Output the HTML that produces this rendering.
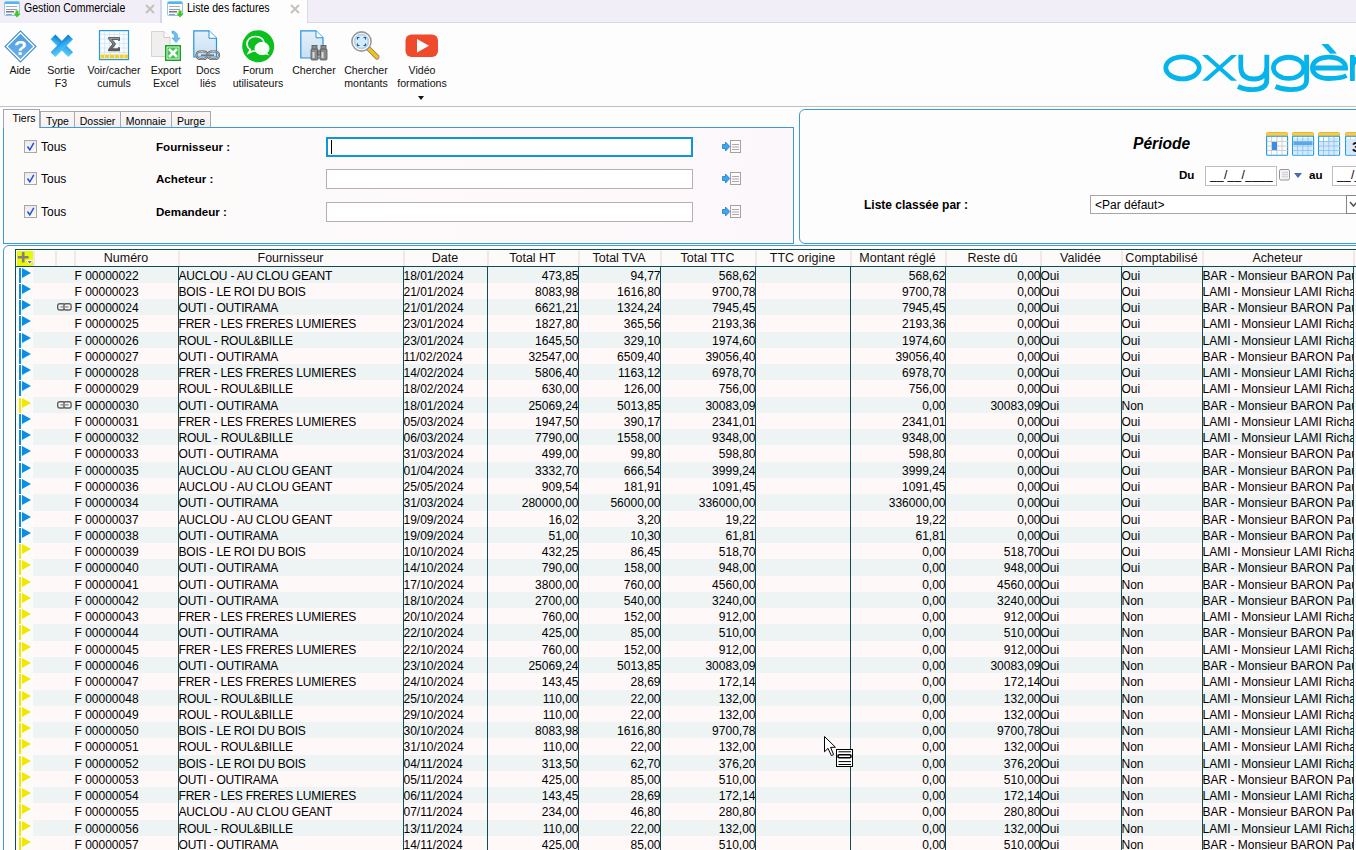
<!DOCTYPE html>
<html><head><meta charset="utf-8">
<style>
*{box-sizing:border-box;margin:0;padding:0}
html,body{width:1356px;height:850px;overflow:hidden;background:#fefdfd;font-family:"Liberation Sans",sans-serif;color:#000;position:relative}
.a{position:absolute}
/* tab bar */
#tabbar{position:absolute;left:0;top:0;width:1356px;height:23px;background:#f2eef8}
.tab{position:absolute;top:0;height:16px;font-size:12.4px;line-height:16px;white-space:nowrap;transform:scaleX(0.85);transform-origin:0 0;color:#000}
.tabx{position:absolute;top:4px;width:10px;height:10px}
/* toolbar */
.tb{position:absolute;top:30px;text-align:center;font-size:10.6px;line-height:13px;color:#111;white-space:nowrap}
.tbt{position:absolute;top:64px;width:100px;text-align:center;font-size:10.6px;line-height:13px;color:#111;white-space:nowrap}
/* filter */
.lbl{position:absolute;font-size:12px;white-space:nowrap}
.b{font-weight:bold;font-size:11.6px}
.cb{position:absolute;width:13px;height:13px;border:1px solid #a8a8a8;background:linear-gradient(#eaeaea,#fafafa)}
.inp{position:absolute;left:326px;width:367px;height:20px;border:1px solid #b8b0b0;background:#fff}
.ptab{position:absolute;font-size:10.5px;line-height:16px;text-align:center;border:1px solid #a8a8b0;border-bottom:none;background:linear-gradient(#fbf7f7,#f3efef)}
/* grid */
.row{position:absolute;left:33px;width:1323px;height:16px}
.row .fb{position:absolute;left:-14px;top:1px;width:2px;height:15px}
.row .ft{position:absolute;left:-11px;top:1px;width:0;height:0;border-top:5px solid transparent;border-bottom:5px solid transparent;border-left:9px solid #0a8ee8}
.c{position:absolute;top:0;height:16px;font-size:12px;line-height:16px;padding-top:1px;white-space:nowrap;overflow:hidden}
.c.r{text-align:right}
.lk{position:absolute;left:24px;top:4px}
.h{position:absolute;top:250px;height:16px;font-size:12.5px;line-height:16px;text-align:center;color:#111;white-space:nowrap}
.hs{position:absolute;top:251px;width:2px;height:15px;background:#f3e6e6}
.vl{position:absolute;top:266px;width:1px;height:584px;background:#0f4d55}
</style></head><body>

<!-- TAB BAR -->
<div id="tabbar"></div>
<div class="a" style="left:160px;top:0;width:2px;height:23px;background:#d4d6ea"></div>
<div class="a" style="left:162px;top:0;width:145px;height:23px;background:#fefdfd"></div>
<div class="a" style="left:307px;top:0;width:1px;height:23px;background:#d6dbea"></div><div class="a" style="left:307px;top:22px;width:1049px;height:1px;background:#d6dbea"></div>
<svg class="a" style="left:4px;top:1px" width="17" height="17" viewBox="0 0 17 17"><rect x="0.5" y="0.5" width="15" height="14" rx="1" fill="#fbfbfb" stroke="#8cc8ee"/><rect x="1" y="1" width="14" height="2" fill="#50b8f0"/><rect x="2" y="5" width="11" height="1" fill="#aab"/><rect x="2" y="8" width="11" height="1" fill="#99a"/><rect x="2" y="10" width="8" height="1.5" fill="#777"/><rect x="2" y="13" width="6" height="1" fill="#99a"/><path d="M11.5 9.5 H14.5 V12.5 H16.5 L13 16.5 L9.5 12.5 H11.5 Z" fill="#3fc81a"/></svg>
<div class="tab" style="left:24px">Gestion Commerciale</div>
<svg class="tabx" style="left:145px" viewBox="0 0 10 10"><path d="M1 1 L9 9 M9 1 L1 9" stroke="#c8c0bc" stroke-width="2"/></svg>
<svg class="a" style="left:167px;top:1px" width="17" height="17" viewBox="0 0 17 17"><rect x="0.5" y="0.5" width="15" height="14" rx="1" fill="#fbfbfb" stroke="#8cc8ee"/><rect x="1" y="1" width="14" height="2" fill="#50b8f0"/><rect x="2" y="5" width="11" height="1" fill="#aab"/><rect x="2" y="8" width="11" height="1" fill="#99a"/><rect x="2" y="10" width="8" height="1.5" fill="#777"/><rect x="2" y="13" width="6" height="1" fill="#99a"/><path d="M11.5 9.5 H14.5 V12.5 H16.5 L13 16.5 L9.5 12.5 H11.5 Z" fill="#3fc81a"/></svg>
<div class="tab" style="left:187px">Liste des factures</div>
<svg class="tabx" style="left:290px" viewBox="0 0 10 10"><path d="M1 1 L9 9 M9 1 L1 9" stroke="#c8c0bc" stroke-width="2"/></svg>

<!-- TOOLBAR -->
<!-- Aide -->
<svg class="a" style="left:3.5px;top:29.5px" width="33" height="33" viewBox="0 0 32 32"><defs><linearGradient id="gaide" x1="0" y1="0" x2="0" y2="1"><stop offset="0" stop-color="#4f9ee0"/><stop offset="1" stop-color="#6ab0ea"/></linearGradient></defs><path d="M16 0.3 L31.7 16 L16 31.7 L0.3 16 Z" fill="#2f86d2"/><path d="M16 1.8 L30.2 16 L16 30.2 L1.8 16 Z" fill="#fff"/><path d="M16 3.6 L28.4 16 L16 28.4 L3.6 16 Z" fill="url(#gaide)"/><text x="16" y="24.6" text-anchor="middle" font-family="Liberation Sans" font-weight="bold" font-size="20.5" fill="#fff">?</text></svg>
<div class="tbt" style="left:-30px">Aide</div>
<!-- Sortie -->
<svg class="a" style="left:46px;top:30px" width="32" height="32" viewBox="0 0 32 32"><defs><linearGradient id="gx" x1="0" y1="0" x2="1" y2="1"><stop offset="0" stop-color="#0a78d0"/><stop offset="0.45" stop-color="#30aaf0"/><stop offset="1" stop-color="#60d0fa"/></linearGradient></defs><g transform="translate(15.8,15.8) rotate(45)"><rect x="-12.5" y="-3.4" width="25" height="6.8" fill="url(#gx)"/><rect x="-3.4" y="-12.5" width="6.8" height="25" fill="url(#gx)"/></g></svg>
<div class="tbt" style="left:11px">Sortie<br>F3</div>
<!-- Voir/cacher -->
<svg class="a" style="left:98px;top:30px" width="32" height="31" viewBox="0 0 32 31"><defs><linearGradient id="gs" x1="0" y1="0" x2="0" y2="1"><stop offset="0" stop-color="#9a9a9a"/><stop offset="1" stop-color="#5a5a5a"/></linearGradient></defs><rect x="1.5" y="0.6" width="29" height="29" fill="#f8fbfe" stroke="#2a96e0" stroke-width="1.2"/><g stroke="#d2e4f4" stroke-width="0.8"><path d="M2 4.5 H30 M2 9 H30 M2 13.5 H30 M2 18 H30 M2 22.5 H30 M6.5 1 V29 M11.5 1 V29 M16.5 1 V29 M21.5 1 V29 M26 1 V29"/></g><g fill="#f2cf2a"><rect x="2.5" y="24.5" width="3.6" height="4"/><rect x="7" y="24.5" width="4" height="4"/><rect x="12" y="24.5" width="4" height="4"/><rect x="17" y="24.5" width="4" height="4"/><rect x="22" y="24.5" width="3.6" height="4"/><rect x="26.5" y="24.5" width="3.5" height="4"/></g><path d="M10.5 7.5 H21.5 V10.5 H20.3 V9.5 H14 L17.6 14 L14 18.8 H20.3 V17.6 H21.5 V20.8 H10.5 V19.4 L14.8 14 L10.5 8.8 Z" fill="url(#gs)" stroke="#3a3a3a" stroke-width="0.7" stroke-linejoin="round"/></svg>
<div class="tbt" style="left:64px">Voir/cacher<br>cumuls</div>
<!-- Export Excel -->
<svg class="a" style="left:150px;top:30px" width="32" height="32" viewBox="0 0 32 32"><path d="M1.5 1.5 H14 L20 7.5 V26.5 H1.5 Z" fill="#f1eeee" stroke="#d8d2d2" stroke-width="1"/><path d="M14 1.5 V7.5 H20" fill="#fff" stroke="#d0caca" stroke-width="1"/><path d="M22 1 C26.5 1.5 28 4 27.6 8 L30 8 L26 12.5 L22 8 L24.6 8 C24.8 5 24 3.6 22 3.2 Z" fill="#6cc0f0" stroke="#3a9ee0" stroke-width="0.6"/><rect x="15.5" y="15.5" width="15" height="15" fill="#2db83a" stroke="#1e9a2a" stroke-width="1"/><rect x="17" y="17" width="12" height="12" fill="#36c846" stroke="#fff" stroke-width="0.8"/><path d="M19 19 L27 27 M27 19 L19 27" stroke="#fff" stroke-width="2.6"/></svg>
<div class="tbt" style="left:116px">Export<br>Excel</div>
<!-- Docs liés -->
<svg class="a" style="left:193px;top:30px" width="30" height="32" viewBox="0 0 30 32"><defs><linearGradient id="gd" x1="0" y1="0" x2="0" y2="1"><stop offset="0" stop-color="#e6f0f8"/><stop offset="1" stop-color="#c6e0f4"/></linearGradient></defs><path d="M0.8 0.8 H16 L23.5 8.3 V27 H0.8 Z" fill="url(#gd)" stroke="#2a92de" stroke-width="1.2"/><path d="M16 0.8 V8.3 H23.5" fill="#fff" stroke="#2a92de" stroke-width="1"/><g fill="none" stroke="#555" stroke-width="2.2"><rect x="3.5" y="21.5" width="11" height="7.5" rx="3.7"/><rect x="15" y="21.5" width="11" height="7.5" rx="3.7"/></g><g fill="none" stroke="#bbb" stroke-width="1"><rect x="3.5" y="21.5" width="11" height="7.5" rx="3.7"/><rect x="15" y="21.5" width="11" height="7.5" rx="3.7"/></g><path d="M8 25.2 H21" stroke="#777" stroke-width="1.6"/></svg>
<div class="tbt" style="left:158px">Docs<br>liés</div>
<!-- Forum -->
<svg class="a" style="left:242px;top:30px" width="33" height="33" viewBox="0 0 33 33"><circle cx="16.2" cy="16.2" r="16" fill="#0bbf1e"/><path d="M13.5 6.5 C8.5 6.5 5 9.8 5 13.8 C5 16.3 6.3 18.4 8.3 19.7 L6.5 23 L11 21 C11.8 21.2 12.6 21.3 13.5 21.3" fill="none" stroke="#fff" stroke-width="1.6"/><path d="M13.5 6.5 C18.5 6.5 22 9.5 22 13" fill="none" stroke="#fff" stroke-width="1.6"/><ellipse cx="20" cy="18.5" rx="7" ry="6.2" fill="#fff" stroke="#fff"/><path d="M24.5 22.5 L27.5 25.5 L22 24" fill="#fff"/><ellipse cx="20" cy="18.5" rx="5.8" ry="5" fill="#f4fff4"/></svg>
<div class="tbt" style="left:208px">Forum<br>utilisateurs</div>
<!-- Chercher -->
<svg class="a" style="left:300px;top:30px" width="30" height="32" viewBox="0 0 30 32"><defs><linearGradient id="gc" x1="0" y1="0" x2="0" y2="1"><stop offset="0" stop-color="#e6f0f8"/><stop offset="1" stop-color="#c6e0f4"/></linearGradient></defs><path d="M0.8 0.8 H16 L23 7.8 V28 H0.8 Z" fill="url(#gc)" stroke="#2a92de" stroke-width="1.2"/><path d="M16 0.8 V7.8 H23" fill="#fff" stroke="#2a92de" stroke-width="1"/><g fill="#8a8a8a" stroke="#555" stroke-width="0.8"><rect x="12" y="15.5" width="5" height="4"/><rect x="21" y="15.5" width="5" height="4"/><rect x="11" y="19" width="7" height="11" rx="1"/><rect x="20" y="19" width="7" height="11" rx="1"/><rect x="17.5" y="21" width="3" height="4"/></g><g fill="#ddd"><rect x="12.5" y="22" width="2" height="6"/><rect x="21.5" y="22" width="2" height="6"/></g></svg>
<div class="tbt" style="left:264px">Chercher</div>
<!-- Chercher montants -->
<svg class="a" style="left:350px;top:30px" width="32" height="32" viewBox="0 0 32 32"><path d="M17 17 L27 27" stroke="#777" stroke-width="5" stroke-linecap="round"/><path d="M19.5 19.5 L27 27" stroke="#f2c21a" stroke-width="3.6" stroke-linecap="round"/><circle cx="11.5" cy="11.5" r="9.6" fill="#fff" stroke="#9a9a9a" stroke-width="1.6"/><circle cx="11.5" cy="11.5" r="7.4" fill="#a8d8f8" stroke="#c8c8c8" stroke-width="0.8"/><circle cx="11.5" cy="11.5" r="6" fill="#d2ecfc"/><path d="M7.5 9.5 V7.5 H9.5 M13.5 7.5 H15.5 V9.5 M15.5 13.5 V15.5 H13.5 M9.5 15.5 H7.5 V13.5" fill="none" stroke="#1a5aa8" stroke-width="1.2"/></svg>
<div class="tbt" style="left:316px">Chercher<br>montants</div>
<!-- Video -->
<svg class="a" style="left:405px;top:34px" width="34" height="24" viewBox="0 0 34 24"><rect x="0.5" y="0.5" width="32.5" height="22.5" rx="6" fill="#f04a2c"/><path d="M12 5 L24 11.8 L12 18.6 Z" fill="#fff"/></svg>
<div class="tbt" style="left:372px">Vidéo<br>formations</div>
<div class="a" style="left:418px;top:96px;width:0;height:0;border-left:3.5px solid transparent;border-right:3.5px solid transparent;border-top:4px solid #111"></div>

<!-- LOGO -->
<svg class="a" style="left:1150px;top:35px" width="206" height="65" viewBox="0 0 206 65">
<g fill="none" stroke="#04b4ea" stroke-width="4.8">
<ellipse cx="32.5" cy="32.85" rx="16.7" ry="11"/>
<path d="M90.8 19.8 V32 C90.8 40 95.5 44 104 44 C112 44 116.8 40 116.8 32 V19.8 M116.8 32 V45 C116.8 51.5 112 54.6 102.5 54.6 C96.5 54.6 92 53.5 88 51.5"/>
<ellipse cx="138.6" cy="32.85" rx="15.2" ry="10.6"/>
<path d="M156.6 19.8 V45 C156.6 51.5 151 54.6 141 54.6 C134.5 54.6 130 53.5 125.5 51.5"/>
<path d="M196.5 40.5 C192 43 186 43.5 179 43.5 C168.5 43.5 162.4 39 162.4 32.85 C162.4 26.5 169.5 22.2 179 22.2 C188.5 22.2 195.6 26.5 195.6 33 H161"/>
<path d="M202.4 20 V46"/>
<path d="M202.4 31 C204 25 207 22.5 212 22.2"/>
</g>
<g fill="#04b4ea">
<path d="M52 19.9 H58 L87 45.8 H81 Z"/>
<path d="M81.3 19.9 H87 L58 45.8 H52 Z"/>
<path d="M171.4 9 H178.3 L186.9 18.5 L180.3 18.8 Z"/>
</g>
</svg>


<!-- toolbar bottom line -->
<div class="a" style="left:0;top:106px;width:1356px;height:1px;background:#c4c0c0"></div>

<!-- FILTER PANEL -->
<!-- left panel -->
<div class="a" style="left:3px;top:127px;width:791px;height:117px;border:1px solid #3c9ad8;background:linear-gradient(100deg,#fdfbfa 0%,#fdf9fb 60%,#fcf7fa 100%)"></div>
<!-- tabs -->
<div class="ptab" style="left:40px;top:111px;width:35px;height:16px;line-height:18px">Type</div>
<div class="ptab" style="left:74px;top:111px;width:47px;height:16px;line-height:18px">Dossier</div>
<div class="ptab" style="left:120px;top:111px;width:52px;height:16px;line-height:18px">Monnaie</div>
<div class="ptab" style="left:171px;top:111px;width:40px;height:16px;line-height:18px">Purge</div>
<div class="ptab" style="left:3px;top:109px;width:37px;height:19px;line-height:17px;padding-left:5px;background:#fdfbfa;border-color:#9aa8b8">Tiers</div>
<!-- rows -->
<div class="cb" style="left:24px;top:140px"></div>
<div class="cb" style="left:24px;top:172px"></div>
<div class="cb" style="left:24px;top:205px"></div>
<svg class="a" style="left:24px;top:140px" width="13" height="13"><path d="M3.5 6.5 L5.8 9.8 L9.8 2.8" fill="none" stroke="#2a50d8" stroke-width="1.5"/></svg>
<svg class="a" style="left:24px;top:172px" width="13" height="13"><path d="M3.5 6.5 L5.8 9.8 L9.8 2.8" fill="none" stroke="#2a50d8" stroke-width="1.5"/></svg>
<svg class="a" style="left:24px;top:205px" width="13" height="13"><path d="M3.5 6.5 L5.8 9.8 L9.8 2.8" fill="none" stroke="#2a50d8" stroke-width="1.5"/></svg>
<div class="lbl" style="left:41px;top:140px">Tous</div>
<div class="lbl" style="left:41px;top:172px">Tous</div>
<div class="lbl" style="left:41px;top:205px">Tous</div>
<div class="lbl b" style="left:156px;top:140px">Fournisseur :</div>
<div class="lbl b" style="left:156px;top:172px">Acheteur :</div>
<div class="lbl b" style="left:156px;top:205px">Demandeur :</div>
<div class="inp" style="top:137px;border:2px solid #1096d8"></div>
<div class="a" style="left:331px;top:140px;width:1px;height:14px;background:#000"></div>
<div class="inp" style="top:169px"></div>
<div class="inp" style="top:202px"></div>
<svg class="a" style="left:722px;top:140px" width="20" height="14" viewBox="0 0 20 14"><rect x="8.5" y="0.5" width="10" height="12" fill="#fafafa" stroke="#a8a0a0"/><path d="M10 4.5 H17 M10 7 H17 M10 9.5 H17" stroke="#b0a8a8"/><path d="M0.5 4.5 H3.5 V2 L7.8 6.5 L3.5 11 V8.5 H0.5 Z" fill="#3aa8f0" stroke="#1a7cc8" stroke-width="0.8"/></svg>
<svg class="a" style="left:722px;top:172px" width="20" height="14" viewBox="0 0 20 14"><rect x="8.5" y="0.5" width="10" height="12" fill="#fafafa" stroke="#a8a0a0"/><path d="M10 4.5 H17 M10 7 H17 M10 9.5 H17" stroke="#b0a8a8"/><path d="M0.5 4.5 H3.5 V2 L7.8 6.5 L3.5 11 V8.5 H0.5 Z" fill="#3aa8f0" stroke="#1a7cc8" stroke-width="0.8"/></svg>
<svg class="a" style="left:722px;top:205px" width="20" height="14" viewBox="0 0 20 14"><rect x="8.5" y="0.5" width="10" height="12" fill="#fafafa" stroke="#a8a0a0"/><path d="M10 4.5 H17 M10 7 H17 M10 9.5 H17" stroke="#b0a8a8"/><path d="M0.5 4.5 H3.5 V2 L7.8 6.5 L3.5 11 V8.5 H0.5 Z" fill="#3aa8f0" stroke="#1a7cc8" stroke-width="0.8"/></svg>

<!-- right panel -->
<div class="a" style="left:799px;top:109px;width:600px;height:135px;border:1px solid #3c9ad8;border-radius:6px;background:#fefdfd"></div>
<div class="lbl" style="left:1133px;top:135px;font-size:15.6px;font-weight:bold;font-style:italic">Période</div>
<svg class="a" style="left:1266px;top:132px" width="23" height="24" viewBox="0 0 23 24"><rect x="0.5" y="0.5" width="21" height="4" rx="1" fill="#f6cc4c" stroke="#e8b830"/><rect x="0.6" y="4.2" width="21" height="19" rx="0.8" fill="#fafcfe" stroke="#1a9ae8" stroke-width="1.1"/><g stroke="#c8c4c4" stroke-width="0.8"><path d="M5.5 5 V23"/><path d="M10.8 5 V23"/><path d="M16 5 V23"/><path d="M1 9.5 H22"/><path d="M1 14 H22"/><path d="M1 18.5 H22"/></g><rect x="6" y="10" width="5" height="8" fill="#3a8ee0"/></svg>
<svg class="a" style="left:1292px;top:132px" width="23" height="24" viewBox="0 0 23 24"><rect x="0.5" y="0.5" width="21" height="4" rx="1" fill="#f6cc4c" stroke="#e8b830"/><rect x="0.6" y="4.2" width="21" height="19" rx="0.8" fill="#fafcfe" stroke="#1a9ae8" stroke-width="1.1"/><rect x="2" y="6" width="18" height="16" fill="#d4eafc"/><g stroke="#88c0f0" stroke-width="0.8"><path d="M5.5 5 V23"/><path d="M10.8 5 V23"/><path d="M16 5 V23"/><path d="M1 9.5 H22"/><path d="M1 14 H22"/><path d="M1 18.5 H22"/></g><rect x="1.5" y="9.5" width="19" height="3.5" fill="#5aa8ea"/></svg>
<svg class="a" style="left:1318px;top:132px" width="23" height="24" viewBox="0 0 23 24"><rect x="0.5" y="0.5" width="21" height="4" rx="1" fill="#f6cc4c" stroke="#e8b830"/><rect x="0.6" y="4.2" width="21" height="19" rx="0.8" fill="#fafcfe" stroke="#1a9ae8" stroke-width="1.1"/><g stroke="#c8c4c4" stroke-width="0.8"><path d="M5.5 5 V23"/><path d="M10.8 5 V23"/><path d="M16 5 V23"/><path d="M1 9.5 H22"/><path d="M1 14 H22"/><path d="M1 18.5 H22"/></g><rect x="2" y="10" width="18" height="12" fill="#d4eafc"/><rect x="11" y="6" width="9" height="4" fill="#d4eafc"/><g stroke="#88c0f0" stroke-width="0.8"><path d="M5.5 5 V23"/><path d="M10.8 5 V23"/><path d="M16 5 V23"/><path d="M1 9.5 H22"/><path d="M1 14 H22"/><path d="M1 18.5 H22"/></g></svg>
<svg class="a" style="left:1345px;top:132px" width="23" height="24" viewBox="0 0 23 24"><rect x="0.5" y="0.5" width="21" height="4" rx="1" fill="#f6cc4c" stroke="#e8b830"/><rect x="0.6" y="4.2" width="21" height="19" rx="0.8" fill="#fafcfe" stroke="#1a9ae8" stroke-width="1.1"/><g stroke="#c8c4c4" stroke-width="0.8"><path d="M5.5 5 V23"/><path d="M10.8 5 V23"/><path d="M16 5 V23"/><path d="M1 9.5 H22"/><path d="M1 14 H22"/><path d="M1 18.5 H22"/></g><rect x="2" y="7" width="18" height="15" fill="#d4eafc"/><text x="7" y="20" font-family="Liberation Sans" font-weight="bold" font-size="15" fill="#111">3</text></svg>
<div class="lbl b" style="left:1179px;top:168px">Du</div>
<div class="a" style="left:1205px;top:166px;width:72px;height:20px;border:1px solid #c4bcbc;background:#fff"></div>
<div class="lbl" style="left:1210px;top:168px;font-size:12px;letter-spacing:0.3px">__/__/____</div>
<svg class="a" style="left:1279px;top:169px" width="12" height="12" viewBox="0 0 12 12"><rect x="0.5" y="0.5" width="10" height="10.5" rx="1.5" fill="#faf8fa" stroke="#9c9090"/><g stroke="#d4d0d8" stroke-width="0.8"><path d="M2.5 3.5 H9 M2.5 5.5 H9 M2.5 7.5 H9 M4 2 V9.5 M6 2 V9.5 M8 2 V9.5"/></g></svg>
<div class="a" style="left:1294px;top:173px;width:0;height:0;border-left:4px solid transparent;border-right:4px solid transparent;border-top:5px solid #4a6ab0"></div>
<div class="lbl b" style="left:1309px;top:168px">au</div>
<div class="a" style="left:1332px;top:166px;width:72px;height:20px;border:1px solid #c4bcbc;background:#fff"></div>
<div class="lbl" style="left:1337px;top:168px;font-size:12px;letter-spacing:0.3px">__/__/____</div>
<div class="lbl b" style="left:864px;top:198px;font-size:12px">Liste classée par :</div>
<div class="a" style="left:1090px;top:195px;width:300px;height:19px;border:1px solid #aaa4a4;background:#fff"></div>
<div class="lbl" style="left:1095px;top:198px;font-size:12px">&lt;Par défaut&gt;</div>
<div class="a" style="left:1346px;top:195px;width:20px;height:19px;border:1px solid #8a8484;background:#fff"></div>
<svg class="a" style="left:1349px;top:200px" width="8" height="8"><path d="M1 2 L4.5 6 L8 2" fill="none" stroke="#555" stroke-width="1.6"/></svg>


<!-- GRID -->
<div class="a" style="left:3px;top:245px;width:1360px;height:620px;border:1px solid #3c9ad8;border-radius:6px;background:#fefdfd"></div>
<div class="a" style="left:15px;top:249px;width:1345px;height:610px;border-top:1px solid #0f4d55;border-left:1px solid #0f4d55;background:#fdfbfa"></div>
<div class="a" style="left:15px;top:266px;width:1345px;height:1px;background:#0f4d55"></div>
<div class="a" style="left:17px;top:251px;width:16px;height:15px;background:#e8f800"></div>
<svg class="a" style="left:17px;top:251px" width="16" height="15" viewBox="0 0 16 15"><path d="M6.2 1 V11.6 M0.8 6.3 H11.6" stroke="#848080" stroke-width="2.6"/><path d="M9.6 9.4 L15.8 9.4 L12.7 13.4 Z" fill="#7a7676" stroke="#fff" stroke-width="1"/></svg>
<span class="h" style="left:74px;width:104px">Numéro</span>
<span class="h" style="left:178px;width:225px">Fournisseur</span>
<span class="h" style="left:403px;width:84px">Date</span>
<span class="h" style="left:487px;width:91px">Total HT</span>
<span class="h" style="left:578px;width:82px">Total TVA</span>
<span class="h" style="left:660px;width:95px">Total TTC</span>
<span class="h" style="left:755px;width:95px">TTC origine</span>
<span class="h" style="left:850px;width:95px">Montant réglé</span>
<span class="h" style="left:945px;width:95px">Reste dû</span>
<span class="h" style="left:1040px;width:81px">Validée</span>
<span class="h" style="left:1121px;width:81px">Comptabilisé</span>
<span class="h" style="left:1202px;width:151px">Acheteur</span>
<i class="hs" style="left:33px"></i>
<i class="hs" style="left:55px"></i>
<i class="hs" style="left:74px"></i>
<i class="hs" style="left:178px"></i>
<i class="hs" style="left:403px"></i>
<i class="hs" style="left:487px"></i>
<i class="hs" style="left:578px"></i>
<i class="hs" style="left:660px"></i>
<i class="hs" style="left:755px"></i>
<i class="hs" style="left:850px"></i>
<i class="hs" style="left:945px"></i>
<i class="hs" style="left:1040px"></i>
<i class="hs" style="left:1121px"></i>
<i class="hs" style="left:1202px"></i>
<i class="hs" style="left:1353px"></i>
<div class="row" style="top:267px;height:16px;background:#eef3f3">
<i class="fb" style="background:#0a8ee8"></i><i class="ft" style="border-left-color:#0a8ee8"></i>
<span class="c" style="left:41.5px;width:103px">F 00000022</span>
<span class="c" style="left:145.5px;width:224px;letter-spacing:-0.2px">AUCLOU - AU CLOU GEANT</span>
<span class="c" style="left:370.5px;width:83px">18/01/2024</span>
<span class="c r" style="left:454px;width:91.5px">473,85</span>
<span class="c r" style="left:545px;width:82.5px">94,77</span>
<span class="c r" style="left:627px;width:95.5px">568,62</span>
<span class="c r" style="left:817px;width:95.5px">568,62</span>
<span class="c r" style="left:912px;width:95.5px">0,00</span>
<span class="c" style="left:1007.5px;width:80px">Oui</span>
<span class="c" style="left:1088.5px;width:80px">Oui</span>
<span class="c" style="left:1169.5px;width:150px">BAR - Monsieur BARON Paul</span>
</div>
<div class="row" style="top:283px;height:16px;background:#fff8f8">
<i class="fb" style="background:#0a8ee8"></i><i class="ft" style="border-left-color:#0a8ee8"></i>
<span class="c" style="left:41.5px;width:103px">F 00000023</span>
<span class="c" style="left:145.5px;width:224px;letter-spacing:-0.2px">BOIS - LE ROI DU BOIS</span>
<span class="c" style="left:370.5px;width:83px">21/01/2024</span>
<span class="c r" style="left:454px;width:91.5px">8083,98</span>
<span class="c r" style="left:545px;width:82.5px">1616,80</span>
<span class="c r" style="left:627px;width:95.5px">9700,78</span>
<span class="c r" style="left:817px;width:95.5px">9700,78</span>
<span class="c r" style="left:912px;width:95.5px">0,00</span>
<span class="c" style="left:1007.5px;width:80px">Oui</span>
<span class="c" style="left:1088.5px;width:80px">Oui</span>
<span class="c" style="left:1169.5px;width:150px">LAMI - Monsieur LAMI Richard</span>
</div>
<div class="row" style="top:299px;height:16px;background:#eef3f3">
<i class="fb" style="background:#0a8ee8"></i><i class="ft" style="border-left-color:#0a8ee8"></i>
<svg class="lk" width="15" height="8" viewBox="0 0 15 8"><rect x="0.7" y="0.7" width="7.2" height="6.3" rx="2" fill="#f4f4f4" stroke="#606060" stroke-width="1.4"/><rect x="6.9" y="0.7" width="7.2" height="6.3" rx="2" fill="#f4f4f4" stroke="#606060" stroke-width="1.4"/><line x1="3.5" y1="3.9" x2="11.5" y2="3.9" stroke="#888" stroke-width="1.3"/></svg>
<span class="c" style="left:41.5px;width:103px">F 00000024</span>
<span class="c" style="left:145.5px;width:224px;letter-spacing:-0.2px">OUTI - OUTIRAMA</span>
<span class="c" style="left:370.5px;width:83px">21/01/2024</span>
<span class="c r" style="left:454px;width:91.5px">6621,21</span>
<span class="c r" style="left:545px;width:82.5px">1324,24</span>
<span class="c r" style="left:627px;width:95.5px">7945,45</span>
<span class="c r" style="left:817px;width:95.5px">7945,45</span>
<span class="c r" style="left:912px;width:95.5px">0,00</span>
<span class="c" style="left:1007.5px;width:80px">Oui</span>
<span class="c" style="left:1088.5px;width:80px">Oui</span>
<span class="c" style="left:1169.5px;width:150px">BAR - Monsieur BARON Paul</span>
</div>
<div class="row" style="top:315px;height:17px;background:#fff8f8">
<i class="fb" style="background:#0a8ee8"></i><i class="ft" style="border-left-color:#0a8ee8"></i>
<span class="c" style="left:41.5px;width:103px">F 00000025</span>
<span class="c" style="left:145.5px;width:224px;letter-spacing:-0.2px">FRER - LES FRERES LUMIERES</span>
<span class="c" style="left:370.5px;width:83px">23/01/2024</span>
<span class="c r" style="left:454px;width:91.5px">1827,80</span>
<span class="c r" style="left:545px;width:82.5px">365,56</span>
<span class="c r" style="left:627px;width:95.5px">2193,36</span>
<span class="c r" style="left:817px;width:95.5px">2193,36</span>
<span class="c r" style="left:912px;width:95.5px">0,00</span>
<span class="c" style="left:1007.5px;width:80px">Oui</span>
<span class="c" style="left:1088.5px;width:80px">Oui</span>
<span class="c" style="left:1169.5px;width:150px">LAMI - Monsieur LAMI Richard</span>
</div>
<div class="row" style="top:332px;height:16px;background:#eef3f3">
<i class="fb" style="background:#0a8ee8"></i><i class="ft" style="border-left-color:#0a8ee8"></i>
<span class="c" style="left:41.5px;width:103px">F 00000026</span>
<span class="c" style="left:145.5px;width:224px;letter-spacing:-0.2px">ROUL - ROUL&amp;BILLE</span>
<span class="c" style="left:370.5px;width:83px">23/01/2024</span>
<span class="c r" style="left:454px;width:91.5px">1645,50</span>
<span class="c r" style="left:545px;width:82.5px">329,10</span>
<span class="c r" style="left:627px;width:95.5px">1974,60</span>
<span class="c r" style="left:817px;width:95.5px">1974,60</span>
<span class="c r" style="left:912px;width:95.5px">0,00</span>
<span class="c" style="left:1007.5px;width:80px">Oui</span>
<span class="c" style="left:1088.5px;width:80px">Oui</span>
<span class="c" style="left:1169.5px;width:150px">LAMI - Monsieur LAMI Richard</span>
</div>
<div class="row" style="top:348px;height:16px;background:#fff8f8">
<i class="fb" style="background:#0a8ee8"></i><i class="ft" style="border-left-color:#0a8ee8"></i>
<span class="c" style="left:41.5px;width:103px">F 00000027</span>
<span class="c" style="left:145.5px;width:224px;letter-spacing:-0.2px">OUTI - OUTIRAMA</span>
<span class="c" style="left:370.5px;width:83px">11/02/2024</span>
<span class="c r" style="left:454px;width:91.5px">32547,00</span>
<span class="c r" style="left:545px;width:82.5px">6509,40</span>
<span class="c r" style="left:627px;width:95.5px">39056,40</span>
<span class="c r" style="left:817px;width:95.5px">39056,40</span>
<span class="c r" style="left:912px;width:95.5px">0,00</span>
<span class="c" style="left:1007.5px;width:80px">Oui</span>
<span class="c" style="left:1088.5px;width:80px">Oui</span>
<span class="c" style="left:1169.5px;width:150px">BAR - Monsieur BARON Paul</span>
</div>
<div class="row" style="top:364px;height:16px;background:#eef3f3">
<i class="fb" style="background:#0a8ee8"></i><i class="ft" style="border-left-color:#0a8ee8"></i>
<span class="c" style="left:41.5px;width:103px">F 00000028</span>
<span class="c" style="left:145.5px;width:224px;letter-spacing:-0.2px">FRER - LES FRERES LUMIERES</span>
<span class="c" style="left:370.5px;width:83px">14/02/2024</span>
<span class="c r" style="left:454px;width:91.5px">5806,40</span>
<span class="c r" style="left:545px;width:82.5px">1163,12</span>
<span class="c r" style="left:627px;width:95.5px">6978,70</span>
<span class="c r" style="left:817px;width:95.5px">6978,70</span>
<span class="c r" style="left:912px;width:95.5px">0,00</span>
<span class="c" style="left:1007.5px;width:80px">Oui</span>
<span class="c" style="left:1088.5px;width:80px">Oui</span>
<span class="c" style="left:1169.5px;width:150px">LAMI - Monsieur LAMI Richard</span>
</div>
<div class="row" style="top:380px;height:17px;background:#fff8f8">
<i class="fb" style="background:#0a8ee8"></i><i class="ft" style="border-left-color:#0a8ee8"></i>
<span class="c" style="left:41.5px;width:103px">F 00000029</span>
<span class="c" style="left:145.5px;width:224px;letter-spacing:-0.2px">ROUL - ROUL&amp;BILLE</span>
<span class="c" style="left:370.5px;width:83px">18/02/2024</span>
<span class="c r" style="left:454px;width:91.5px">630,00</span>
<span class="c r" style="left:545px;width:82.5px">126,00</span>
<span class="c r" style="left:627px;width:95.5px">756,00</span>
<span class="c r" style="left:817px;width:95.5px">756,00</span>
<span class="c r" style="left:912px;width:95.5px">0,00</span>
<span class="c" style="left:1007.5px;width:80px">Oui</span>
<span class="c" style="left:1088.5px;width:80px">Oui</span>
<span class="c" style="left:1169.5px;width:150px">LAMI - Monsieur LAMI Richard</span>
</div>
<div class="row" style="top:397px;height:16px;background:#eef3f3">
<i class="fb" style="background:#f0e800"></i><i class="ft" style="border-left-color:#f0e800"></i>
<svg class="lk" width="15" height="8" viewBox="0 0 15 8"><rect x="0.7" y="0.7" width="7.2" height="6.3" rx="2" fill="#f4f4f4" stroke="#606060" stroke-width="1.4"/><rect x="6.9" y="0.7" width="7.2" height="6.3" rx="2" fill="#f4f4f4" stroke="#606060" stroke-width="1.4"/><line x1="3.5" y1="3.9" x2="11.5" y2="3.9" stroke="#888" stroke-width="1.3"/></svg>
<span class="c" style="left:41.5px;width:103px">F 00000030</span>
<span class="c" style="left:145.5px;width:224px;letter-spacing:-0.2px">OUTI - OUTIRAMA</span>
<span class="c" style="left:370.5px;width:83px">18/01/2024</span>
<span class="c r" style="left:454px;width:91.5px">25069,24</span>
<span class="c r" style="left:545px;width:82.5px">5013,85</span>
<span class="c r" style="left:627px;width:95.5px">30083,09</span>
<span class="c r" style="left:817px;width:95.5px">0,00</span>
<span class="c r" style="left:912px;width:95.5px">30083,09</span>
<span class="c" style="left:1007.5px;width:80px">Oui</span>
<span class="c" style="left:1088.5px;width:80px">Non</span>
<span class="c" style="left:1169.5px;width:150px">BAR - Monsieur BARON Paul</span>
</div>
<div class="row" style="top:413px;height:16px;background:#fff8f8">
<i class="fb" style="background:#0a8ee8"></i><i class="ft" style="border-left-color:#0a8ee8"></i>
<span class="c" style="left:41.5px;width:103px">F 00000031</span>
<span class="c" style="left:145.5px;width:224px;letter-spacing:-0.2px">FRER - LES FRERES LUMIERES</span>
<span class="c" style="left:370.5px;width:83px">05/03/2024</span>
<span class="c r" style="left:454px;width:91.5px">1947,50</span>
<span class="c r" style="left:545px;width:82.5px">390,17</span>
<span class="c r" style="left:627px;width:95.5px">2341,01</span>
<span class="c r" style="left:817px;width:95.5px">2341,01</span>
<span class="c r" style="left:912px;width:95.5px">0,00</span>
<span class="c" style="left:1007.5px;width:80px">Oui</span>
<span class="c" style="left:1088.5px;width:80px">Oui</span>
<span class="c" style="left:1169.5px;width:150px">LAMI - Monsieur LAMI Richard</span>
</div>
<div class="row" style="top:429px;height:16px;background:#eef3f3">
<i class="fb" style="background:#0a8ee8"></i><i class="ft" style="border-left-color:#0a8ee8"></i>
<span class="c" style="left:41.5px;width:103px">F 00000032</span>
<span class="c" style="left:145.5px;width:224px;letter-spacing:-0.2px">ROUL - ROUL&amp;BILLE</span>
<span class="c" style="left:370.5px;width:83px">06/03/2024</span>
<span class="c r" style="left:454px;width:91.5px">7790,00</span>
<span class="c r" style="left:545px;width:82.5px">1558,00</span>
<span class="c r" style="left:627px;width:95.5px">9348,00</span>
<span class="c r" style="left:817px;width:95.5px">9348,00</span>
<span class="c r" style="left:912px;width:95.5px">0,00</span>
<span class="c" style="left:1007.5px;width:80px">Oui</span>
<span class="c" style="left:1088.5px;width:80px">Oui</span>
<span class="c" style="left:1169.5px;width:150px">LAMI - Monsieur LAMI Richard</span>
</div>
<div class="row" style="top:445px;height:17px;background:#fff8f8">
<i class="fb" style="background:#0a8ee8"></i><i class="ft" style="border-left-color:#0a8ee8"></i>
<span class="c" style="left:41.5px;width:103px">F 00000033</span>
<span class="c" style="left:145.5px;width:224px;letter-spacing:-0.2px">OUTI - OUTIRAMA</span>
<span class="c" style="left:370.5px;width:83px">31/03/2024</span>
<span class="c r" style="left:454px;width:91.5px">499,00</span>
<span class="c r" style="left:545px;width:82.5px">99,80</span>
<span class="c r" style="left:627px;width:95.5px">598,80</span>
<span class="c r" style="left:817px;width:95.5px">598,80</span>
<span class="c r" style="left:912px;width:95.5px">0,00</span>
<span class="c" style="left:1007.5px;width:80px">Oui</span>
<span class="c" style="left:1088.5px;width:80px">Oui</span>
<span class="c" style="left:1169.5px;width:150px">BAR - Monsieur BARON Paul</span>
</div>
<div class="row" style="top:462px;height:16px;background:#eef3f3">
<i class="fb" style="background:#0a8ee8"></i><i class="ft" style="border-left-color:#0a8ee8"></i>
<span class="c" style="left:41.5px;width:103px">F 00000035</span>
<span class="c" style="left:145.5px;width:224px;letter-spacing:-0.2px">AUCLOU - AU CLOU GEANT</span>
<span class="c" style="left:370.5px;width:83px">01/04/2024</span>
<span class="c r" style="left:454px;width:91.5px">3332,70</span>
<span class="c r" style="left:545px;width:82.5px">666,54</span>
<span class="c r" style="left:627px;width:95.5px">3999,24</span>
<span class="c r" style="left:817px;width:95.5px">3999,24</span>
<span class="c r" style="left:912px;width:95.5px">0,00</span>
<span class="c" style="left:1007.5px;width:80px">Oui</span>
<span class="c" style="left:1088.5px;width:80px">Oui</span>
<span class="c" style="left:1169.5px;width:150px">BAR - Monsieur BARON Paul</span>
</div>
<div class="row" style="top:478px;height:16px;background:#fff8f8">
<i class="fb" style="background:#0a8ee8"></i><i class="ft" style="border-left-color:#0a8ee8"></i>
<span class="c" style="left:41.5px;width:103px">F 00000036</span>
<span class="c" style="left:145.5px;width:224px;letter-spacing:-0.2px">AUCLOU - AU CLOU GEANT</span>
<span class="c" style="left:370.5px;width:83px">25/05/2024</span>
<span class="c r" style="left:454px;width:91.5px">909,54</span>
<span class="c r" style="left:545px;width:82.5px">181,91</span>
<span class="c r" style="left:627px;width:95.5px">1091,45</span>
<span class="c r" style="left:817px;width:95.5px">1091,45</span>
<span class="c r" style="left:912px;width:95.5px">0,00</span>
<span class="c" style="left:1007.5px;width:80px">Oui</span>
<span class="c" style="left:1088.5px;width:80px">Oui</span>
<span class="c" style="left:1169.5px;width:150px">BAR - Monsieur BARON Paul</span>
</div>
<div class="row" style="top:494px;height:17px;background:#eef3f3">
<i class="fb" style="background:#0a8ee8"></i><i class="ft" style="border-left-color:#0a8ee8"></i>
<span class="c" style="left:41.5px;width:103px">F 00000034</span>
<span class="c" style="left:145.5px;width:224px;letter-spacing:-0.2px">OUTI - OUTIRAMA</span>
<span class="c" style="left:370.5px;width:83px">31/03/2024</span>
<span class="c r" style="left:454px;width:91.5px">280000,00</span>
<span class="c r" style="left:545px;width:82.5px">56000,00</span>
<span class="c r" style="left:627px;width:95.5px">336000,00</span>
<span class="c r" style="left:817px;width:95.5px">336000,00</span>
<span class="c r" style="left:912px;width:95.5px">0,00</span>
<span class="c" style="left:1007.5px;width:80px">Oui</span>
<span class="c" style="left:1088.5px;width:80px">Oui</span>
<span class="c" style="left:1169.5px;width:150px">BAR - Monsieur BARON Paul</span>
</div>
<div class="row" style="top:511px;height:16px;background:#fff8f8">
<i class="fb" style="background:#0a8ee8"></i><i class="ft" style="border-left-color:#0a8ee8"></i>
<span class="c" style="left:41.5px;width:103px">F 00000037</span>
<span class="c" style="left:145.5px;width:224px;letter-spacing:-0.2px">AUCLOU - AU CLOU GEANT</span>
<span class="c" style="left:370.5px;width:83px">19/09/2024</span>
<span class="c r" style="left:454px;width:91.5px">16,02</span>
<span class="c r" style="left:545px;width:82.5px">3,20</span>
<span class="c r" style="left:627px;width:95.5px">19,22</span>
<span class="c r" style="left:817px;width:95.5px">19,22</span>
<span class="c r" style="left:912px;width:95.5px">0,00</span>
<span class="c" style="left:1007.5px;width:80px">Oui</span>
<span class="c" style="left:1088.5px;width:80px">Oui</span>
<span class="c" style="left:1169.5px;width:150px">BAR - Monsieur BARON Paul</span>
</div>
<div class="row" style="top:527px;height:16px;background:#eef3f3">
<i class="fb" style="background:#0a8ee8"></i><i class="ft" style="border-left-color:#0a8ee8"></i>
<span class="c" style="left:41.5px;width:103px">F 00000038</span>
<span class="c" style="left:145.5px;width:224px;letter-spacing:-0.2px">OUTI - OUTIRAMA</span>
<span class="c" style="left:370.5px;width:83px">19/09/2024</span>
<span class="c r" style="left:454px;width:91.5px">51,00</span>
<span class="c r" style="left:545px;width:82.5px">10,30</span>
<span class="c r" style="left:627px;width:95.5px">61,81</span>
<span class="c r" style="left:817px;width:95.5px">61,81</span>
<span class="c r" style="left:912px;width:95.5px">0,00</span>
<span class="c" style="left:1007.5px;width:80px">Oui</span>
<span class="c" style="left:1088.5px;width:80px">Oui</span>
<span class="c" style="left:1169.5px;width:150px">BAR - Monsieur BARON Paul</span>
</div>
<div class="row" style="top:543px;height:16px;background:#fff8f8">
<i class="fb" style="background:#f0e800"></i><i class="ft" style="border-left-color:#f0e800"></i>
<span class="c" style="left:41.5px;width:103px">F 00000039</span>
<span class="c" style="left:145.5px;width:224px;letter-spacing:-0.2px">BOIS - LE ROI DU BOIS</span>
<span class="c" style="left:370.5px;width:83px">10/10/2024</span>
<span class="c r" style="left:454px;width:91.5px">432,25</span>
<span class="c r" style="left:545px;width:82.5px">86,45</span>
<span class="c r" style="left:627px;width:95.5px">518,70</span>
<span class="c r" style="left:817px;width:95.5px">0,00</span>
<span class="c r" style="left:912px;width:95.5px">518,70</span>
<span class="c" style="left:1007.5px;width:80px">Oui</span>
<span class="c" style="left:1088.5px;width:80px">Oui</span>
<span class="c" style="left:1169.5px;width:150px">LAMI - Monsieur LAMI Richard</span>
</div>
<div class="row" style="top:559px;height:17px;background:#eef3f3">
<i class="fb" style="background:#f0e800"></i><i class="ft" style="border-left-color:#f0e800"></i>
<span class="c" style="left:41.5px;width:103px">F 00000040</span>
<span class="c" style="left:145.5px;width:224px;letter-spacing:-0.2px">OUTI - OUTIRAMA</span>
<span class="c" style="left:370.5px;width:83px">14/10/2024</span>
<span class="c r" style="left:454px;width:91.5px">790,00</span>
<span class="c r" style="left:545px;width:82.5px">158,00</span>
<span class="c r" style="left:627px;width:95.5px">948,00</span>
<span class="c r" style="left:817px;width:95.5px">0,00</span>
<span class="c r" style="left:912px;width:95.5px">948,00</span>
<span class="c" style="left:1007.5px;width:80px">Oui</span>
<span class="c" style="left:1088.5px;width:80px">Oui</span>
<span class="c" style="left:1169.5px;width:150px">BAR - Monsieur BARON Paul</span>
</div>
<div class="row" style="top:576px;height:16px;background:#fff8f8">
<i class="fb" style="background:#f0e800"></i><i class="ft" style="border-left-color:#f0e800"></i>
<span class="c" style="left:41.5px;width:103px">F 00000041</span>
<span class="c" style="left:145.5px;width:224px;letter-spacing:-0.2px">OUTI - OUTIRAMA</span>
<span class="c" style="left:370.5px;width:83px">17/10/2024</span>
<span class="c r" style="left:454px;width:91.5px">3800,00</span>
<span class="c r" style="left:545px;width:82.5px">760,00</span>
<span class="c r" style="left:627px;width:95.5px">4560,00</span>
<span class="c r" style="left:817px;width:95.5px">0,00</span>
<span class="c r" style="left:912px;width:95.5px">4560,00</span>
<span class="c" style="left:1007.5px;width:80px">Oui</span>
<span class="c" style="left:1088.5px;width:80px">Non</span>
<span class="c" style="left:1169.5px;width:150px">BAR - Monsieur BARON Paul</span>
</div>
<div class="row" style="top:592px;height:16px;background:#eef3f3">
<i class="fb" style="background:#f0e800"></i><i class="ft" style="border-left-color:#f0e800"></i>
<span class="c" style="left:41.5px;width:103px">F 00000042</span>
<span class="c" style="left:145.5px;width:224px;letter-spacing:-0.2px">OUTI - OUTIRAMA</span>
<span class="c" style="left:370.5px;width:83px">18/10/2024</span>
<span class="c r" style="left:454px;width:91.5px">2700,00</span>
<span class="c r" style="left:545px;width:82.5px">540,00</span>
<span class="c r" style="left:627px;width:95.5px">3240,00</span>
<span class="c r" style="left:817px;width:95.5px">0,00</span>
<span class="c r" style="left:912px;width:95.5px">3240,00</span>
<span class="c" style="left:1007.5px;width:80px">Oui</span>
<span class="c" style="left:1088.5px;width:80px">Non</span>
<span class="c" style="left:1169.5px;width:150px">BAR - Monsieur BARON Paul</span>
</div>
<div class="row" style="top:608px;height:16px;background:#fff8f8">
<i class="fb" style="background:#f0e800"></i><i class="ft" style="border-left-color:#f0e800"></i>
<span class="c" style="left:41.5px;width:103px">F 00000043</span>
<span class="c" style="left:145.5px;width:224px;letter-spacing:-0.2px">FRER - LES FRERES LUMIERES</span>
<span class="c" style="left:370.5px;width:83px">20/10/2024</span>
<span class="c r" style="left:454px;width:91.5px">760,00</span>
<span class="c r" style="left:545px;width:82.5px">152,00</span>
<span class="c r" style="left:627px;width:95.5px">912,00</span>
<span class="c r" style="left:817px;width:95.5px">0,00</span>
<span class="c r" style="left:912px;width:95.5px">912,00</span>
<span class="c" style="left:1007.5px;width:80px">Oui</span>
<span class="c" style="left:1088.5px;width:80px">Non</span>
<span class="c" style="left:1169.5px;width:150px">LAMI - Monsieur LAMI Richard</span>
</div>
<div class="row" style="top:624px;height:17px;background:#eef3f3">
<i class="fb" style="background:#f0e800"></i><i class="ft" style="border-left-color:#f0e800"></i>
<span class="c" style="left:41.5px;width:103px">F 00000044</span>
<span class="c" style="left:145.5px;width:224px;letter-spacing:-0.2px">OUTI - OUTIRAMA</span>
<span class="c" style="left:370.5px;width:83px">22/10/2024</span>
<span class="c r" style="left:454px;width:91.5px">425,00</span>
<span class="c r" style="left:545px;width:82.5px">85,00</span>
<span class="c r" style="left:627px;width:95.5px">510,00</span>
<span class="c r" style="left:817px;width:95.5px">0,00</span>
<span class="c r" style="left:912px;width:95.5px">510,00</span>
<span class="c" style="left:1007.5px;width:80px">Oui</span>
<span class="c" style="left:1088.5px;width:80px">Non</span>
<span class="c" style="left:1169.5px;width:150px">BAR - Monsieur BARON Paul</span>
</div>
<div class="row" style="top:641px;height:16px;background:#fff8f8">
<i class="fb" style="background:#f0e800"></i><i class="ft" style="border-left-color:#f0e800"></i>
<span class="c" style="left:41.5px;width:103px">F 00000045</span>
<span class="c" style="left:145.5px;width:224px;letter-spacing:-0.2px">FRER - LES FRERES LUMIERES</span>
<span class="c" style="left:370.5px;width:83px">22/10/2024</span>
<span class="c r" style="left:454px;width:91.5px">760,00</span>
<span class="c r" style="left:545px;width:82.5px">152,00</span>
<span class="c r" style="left:627px;width:95.5px">912,00</span>
<span class="c r" style="left:817px;width:95.5px">0,00</span>
<span class="c r" style="left:912px;width:95.5px">912,00</span>
<span class="c" style="left:1007.5px;width:80px">Oui</span>
<span class="c" style="left:1088.5px;width:80px">Non</span>
<span class="c" style="left:1169.5px;width:150px">LAMI - Monsieur LAMI Richard</span>
</div>
<div class="row" style="top:657px;height:16px;background:#eef3f3">
<i class="fb" style="background:#f0e800"></i><i class="ft" style="border-left-color:#f0e800"></i>
<span class="c" style="left:41.5px;width:103px">F 00000046</span>
<span class="c" style="left:145.5px;width:224px;letter-spacing:-0.2px">OUTI - OUTIRAMA</span>
<span class="c" style="left:370.5px;width:83px">23/10/2024</span>
<span class="c r" style="left:454px;width:91.5px">25069,24</span>
<span class="c r" style="left:545px;width:82.5px">5013,85</span>
<span class="c r" style="left:627px;width:95.5px">30083,09</span>
<span class="c r" style="left:817px;width:95.5px">0,00</span>
<span class="c r" style="left:912px;width:95.5px">30083,09</span>
<span class="c" style="left:1007.5px;width:80px">Oui</span>
<span class="c" style="left:1088.5px;width:80px">Non</span>
<span class="c" style="left:1169.5px;width:150px">BAR - Monsieur BARON Paul</span>
</div>
<div class="row" style="top:673px;height:17px;background:#fff8f8">
<i class="fb" style="background:#f0e800"></i><i class="ft" style="border-left-color:#f0e800"></i>
<span class="c" style="left:41.5px;width:103px">F 00000047</span>
<span class="c" style="left:145.5px;width:224px;letter-spacing:-0.2px">FRER - LES FRERES LUMIERES</span>
<span class="c" style="left:370.5px;width:83px">24/10/2024</span>
<span class="c r" style="left:454px;width:91.5px">143,45</span>
<span class="c r" style="left:545px;width:82.5px">28,69</span>
<span class="c r" style="left:627px;width:95.5px">172,14</span>
<span class="c r" style="left:817px;width:95.5px">0,00</span>
<span class="c r" style="left:912px;width:95.5px">172,14</span>
<span class="c" style="left:1007.5px;width:80px">Oui</span>
<span class="c" style="left:1088.5px;width:80px">Non</span>
<span class="c" style="left:1169.5px;width:150px">LAMI - Monsieur LAMI Richard</span>
</div>
<div class="row" style="top:690px;height:16px;background:#eef3f3">
<i class="fb" style="background:#f0e800"></i><i class="ft" style="border-left-color:#f0e800"></i>
<span class="c" style="left:41.5px;width:103px">F 00000048</span>
<span class="c" style="left:145.5px;width:224px;letter-spacing:-0.2px">ROUL - ROUL&amp;BILLE</span>
<span class="c" style="left:370.5px;width:83px">25/10/2024</span>
<span class="c r" style="left:454px;width:91.5px">110,00</span>
<span class="c r" style="left:545px;width:82.5px">22,00</span>
<span class="c r" style="left:627px;width:95.5px">132,00</span>
<span class="c r" style="left:817px;width:95.5px">0,00</span>
<span class="c r" style="left:912px;width:95.5px">132,00</span>
<span class="c" style="left:1007.5px;width:80px">Oui</span>
<span class="c" style="left:1088.5px;width:80px">Non</span>
<span class="c" style="left:1169.5px;width:150px">LAMI - Monsieur LAMI Richard</span>
</div>
<div class="row" style="top:706px;height:16px;background:#fff8f8">
<i class="fb" style="background:#f0e800"></i><i class="ft" style="border-left-color:#f0e800"></i>
<span class="c" style="left:41.5px;width:103px">F 00000049</span>
<span class="c" style="left:145.5px;width:224px;letter-spacing:-0.2px">ROUL - ROUL&amp;BILLE</span>
<span class="c" style="left:370.5px;width:83px">29/10/2024</span>
<span class="c r" style="left:454px;width:91.5px">110,00</span>
<span class="c r" style="left:545px;width:82.5px">22,00</span>
<span class="c r" style="left:627px;width:95.5px">132,00</span>
<span class="c r" style="left:817px;width:95.5px">0,00</span>
<span class="c r" style="left:912px;width:95.5px">132,00</span>
<span class="c" style="left:1007.5px;width:80px">Oui</span>
<span class="c" style="left:1088.5px;width:80px">Non</span>
<span class="c" style="left:1169.5px;width:150px">LAMI - Monsieur LAMI Richard</span>
</div>
<div class="row" style="top:722px;height:16px;background:#eef3f3">
<i class="fb" style="background:#f0e800"></i><i class="ft" style="border-left-color:#f0e800"></i>
<span class="c" style="left:41.5px;width:103px">F 00000050</span>
<span class="c" style="left:145.5px;width:224px;letter-spacing:-0.2px">BOIS - LE ROI DU BOIS</span>
<span class="c" style="left:370.5px;width:83px">30/10/2024</span>
<span class="c r" style="left:454px;width:91.5px">8083,98</span>
<span class="c r" style="left:545px;width:82.5px">1616,80</span>
<span class="c r" style="left:627px;width:95.5px">9700,78</span>
<span class="c r" style="left:817px;width:95.5px">0,00</span>
<span class="c r" style="left:912px;width:95.5px">9700,78</span>
<span class="c" style="left:1007.5px;width:80px">Oui</span>
<span class="c" style="left:1088.5px;width:80px">Non</span>
<span class="c" style="left:1169.5px;width:150px">LAMI - Monsieur LAMI Richard</span>
</div>
<div class="row" style="top:738px;height:17px;background:#fff8f8">
<i class="fb" style="background:#f0e800"></i><i class="ft" style="border-left-color:#f0e800"></i>
<span class="c" style="left:41.5px;width:103px">F 00000051</span>
<span class="c" style="left:145.5px;width:224px;letter-spacing:-0.2px">ROUL - ROUL&amp;BILLE</span>
<span class="c" style="left:370.5px;width:83px">31/10/2024</span>
<span class="c r" style="left:454px;width:91.5px">110,00</span>
<span class="c r" style="left:545px;width:82.5px">22,00</span>
<span class="c r" style="left:627px;width:95.5px">132,00</span>
<span class="c r" style="left:817px;width:95.5px">0,00</span>
<span class="c r" style="left:912px;width:95.5px">132,00</span>
<span class="c" style="left:1007.5px;width:80px">Oui</span>
<span class="c" style="left:1088.5px;width:80px">Non</span>
<span class="c" style="left:1169.5px;width:150px">LAMI - Monsieur LAMI Richard</span>
</div>
<div class="row" style="top:755px;height:16px;background:#eef3f3">
<i class="fb" style="background:#f0e800"></i><i class="ft" style="border-left-color:#f0e800"></i>
<span class="c" style="left:41.5px;width:103px">F 00000052</span>
<span class="c" style="left:145.5px;width:224px;letter-spacing:-0.2px">BOIS - LE ROI DU BOIS</span>
<span class="c" style="left:370.5px;width:83px">04/11/2024</span>
<span class="c r" style="left:454px;width:91.5px">313,50</span>
<span class="c r" style="left:545px;width:82.5px">62,70</span>
<span class="c r" style="left:627px;width:95.5px">376,20</span>
<span class="c r" style="left:817px;width:95.5px">0,00</span>
<span class="c r" style="left:912px;width:95.5px">376,20</span>
<span class="c" style="left:1007.5px;width:80px">Oui</span>
<span class="c" style="left:1088.5px;width:80px">Non</span>
<span class="c" style="left:1169.5px;width:150px">LAMI - Monsieur LAMI Richard</span>
</div>
<div class="row" style="top:771px;height:16px;background:#fff8f8">
<i class="fb" style="background:#f0e800"></i><i class="ft" style="border-left-color:#f0e800"></i>
<span class="c" style="left:41.5px;width:103px">F 00000053</span>
<span class="c" style="left:145.5px;width:224px;letter-spacing:-0.2px">OUTI - OUTIRAMA</span>
<span class="c" style="left:370.5px;width:83px">05/11/2024</span>
<span class="c r" style="left:454px;width:91.5px">425,00</span>
<span class="c r" style="left:545px;width:82.5px">85,00</span>
<span class="c r" style="left:627px;width:95.5px">510,00</span>
<span class="c r" style="left:817px;width:95.5px">0,00</span>
<span class="c r" style="left:912px;width:95.5px">510,00</span>
<span class="c" style="left:1007.5px;width:80px">Oui</span>
<span class="c" style="left:1088.5px;width:80px">Non</span>
<span class="c" style="left:1169.5px;width:150px">BAR - Monsieur BARON Paul</span>
</div>
<div class="row" style="top:787px;height:16px;background:#eef3f3">
<i class="fb" style="background:#f0e800"></i><i class="ft" style="border-left-color:#f0e800"></i>
<span class="c" style="left:41.5px;width:103px">F 00000054</span>
<span class="c" style="left:145.5px;width:224px;letter-spacing:-0.2px">FRER - LES FRERES LUMIERES</span>
<span class="c" style="left:370.5px;width:83px">06/11/2024</span>
<span class="c r" style="left:454px;width:91.5px">143,45</span>
<span class="c r" style="left:545px;width:82.5px">28,69</span>
<span class="c r" style="left:627px;width:95.5px">172,14</span>
<span class="c r" style="left:817px;width:95.5px">0,00</span>
<span class="c r" style="left:912px;width:95.5px">172,14</span>
<span class="c" style="left:1007.5px;width:80px">Oui</span>
<span class="c" style="left:1088.5px;width:80px">Non</span>
<span class="c" style="left:1169.5px;width:150px">LAMI - Monsieur LAMI Richard</span>
</div>
<div class="row" style="top:803px;height:17px;background:#fff8f8">
<i class="fb" style="background:#f0e800"></i><i class="ft" style="border-left-color:#f0e800"></i>
<span class="c" style="left:41.5px;width:103px">F 00000055</span>
<span class="c" style="left:145.5px;width:224px;letter-spacing:-0.2px">AUCLOU - AU CLOU GEANT</span>
<span class="c" style="left:370.5px;width:83px">07/11/2024</span>
<span class="c r" style="left:454px;width:91.5px">234,00</span>
<span class="c r" style="left:545px;width:82.5px">46,80</span>
<span class="c r" style="left:627px;width:95.5px">280,80</span>
<span class="c r" style="left:817px;width:95.5px">0,00</span>
<span class="c r" style="left:912px;width:95.5px">280,80</span>
<span class="c" style="left:1007.5px;width:80px">Oui</span>
<span class="c" style="left:1088.5px;width:80px">Non</span>
<span class="c" style="left:1169.5px;width:150px">BAR - Monsieur BARON Paul</span>
</div>
<div class="row" style="top:820px;height:16px;background:#eef3f3">
<i class="fb" style="background:#f0e800"></i><i class="ft" style="border-left-color:#f0e800"></i>
<span class="c" style="left:41.5px;width:103px">F 00000056</span>
<span class="c" style="left:145.5px;width:224px;letter-spacing:-0.2px">ROUL - ROUL&amp;BILLE</span>
<span class="c" style="left:370.5px;width:83px">13/11/2024</span>
<span class="c r" style="left:454px;width:91.5px">110,00</span>
<span class="c r" style="left:545px;width:82.5px">22,00</span>
<span class="c r" style="left:627px;width:95.5px">132,00</span>
<span class="c r" style="left:817px;width:95.5px">0,00</span>
<span class="c r" style="left:912px;width:95.5px">132,00</span>
<span class="c" style="left:1007.5px;width:80px">Oui</span>
<span class="c" style="left:1088.5px;width:80px">Non</span>
<span class="c" style="left:1169.5px;width:150px">LAMI - Monsieur LAMI Richard</span>
</div>
<div class="row" style="top:836px;height:16px;background:#fff8f8">
<i class="fb" style="background:#f0e800"></i><i class="ft" style="border-left-color:#f0e800"></i>
<span class="c" style="left:41.5px;width:103px">F 00000057</span>
<span class="c" style="left:145.5px;width:224px;letter-spacing:-0.2px">OUTI - OUTIRAMA</span>
<span class="c" style="left:370.5px;width:83px">14/11/2024</span>
<span class="c r" style="left:454px;width:91.5px">425,00</span>
<span class="c r" style="left:545px;width:82.5px">85,00</span>
<span class="c r" style="left:627px;width:95.5px">510,00</span>
<span class="c r" style="left:817px;width:95.5px">0,00</span>
<span class="c r" style="left:912px;width:95.5px">510,00</span>
<span class="c" style="left:1007.5px;width:80px">Oui</span>
<span class="c" style="left:1088.5px;width:80px">Non</span>
<span class="c" style="left:1169.5px;width:150px">BAR - Monsieur BARON Paul</span>
</div>
<i class="vl" style="left:178px"></i>
<i class="vl" style="left:403px"></i>
<i class="vl" style="left:487px"></i>
<i class="vl" style="left:578px"></i>
<i class="vl" style="left:660px"></i>
<i class="vl" style="left:755px"></i>
<i class="vl" style="left:850px"></i>
<i class="vl" style="left:945px"></i>
<i class="vl" style="left:1040px"></i>
<i class="vl" style="left:1121px"></i>
<i class="vl" style="left:1202px"></i>
<i class="vl" style="left:1353px"></i>

<!-- cursor -->
<svg class="a" style="left:824px;top:736px" width="30" height="34" viewBox="0 0 30 34"><path d="M0.5 0.5 L0.5 15.8 L4 12.4 L7.4 19.6 L9.6 18.6 L6.6 11.4 L11.4 11.2 Z" fill="#fff" stroke="#000" stroke-width="1"/><rect x="12.5" y="13.5" width="16" height="17" fill="#fff" stroke="#000"/><path d="M14.5 15.8 H27 M14.5 25.6 H27 M14.5 28.5 H27" stroke="#000" stroke-width="1"/><rect x="14" y="18.8" width="13" height="3" rx="1.2" fill="#fff" stroke="#000" stroke-width="1.6"/></svg>
</body></html>
